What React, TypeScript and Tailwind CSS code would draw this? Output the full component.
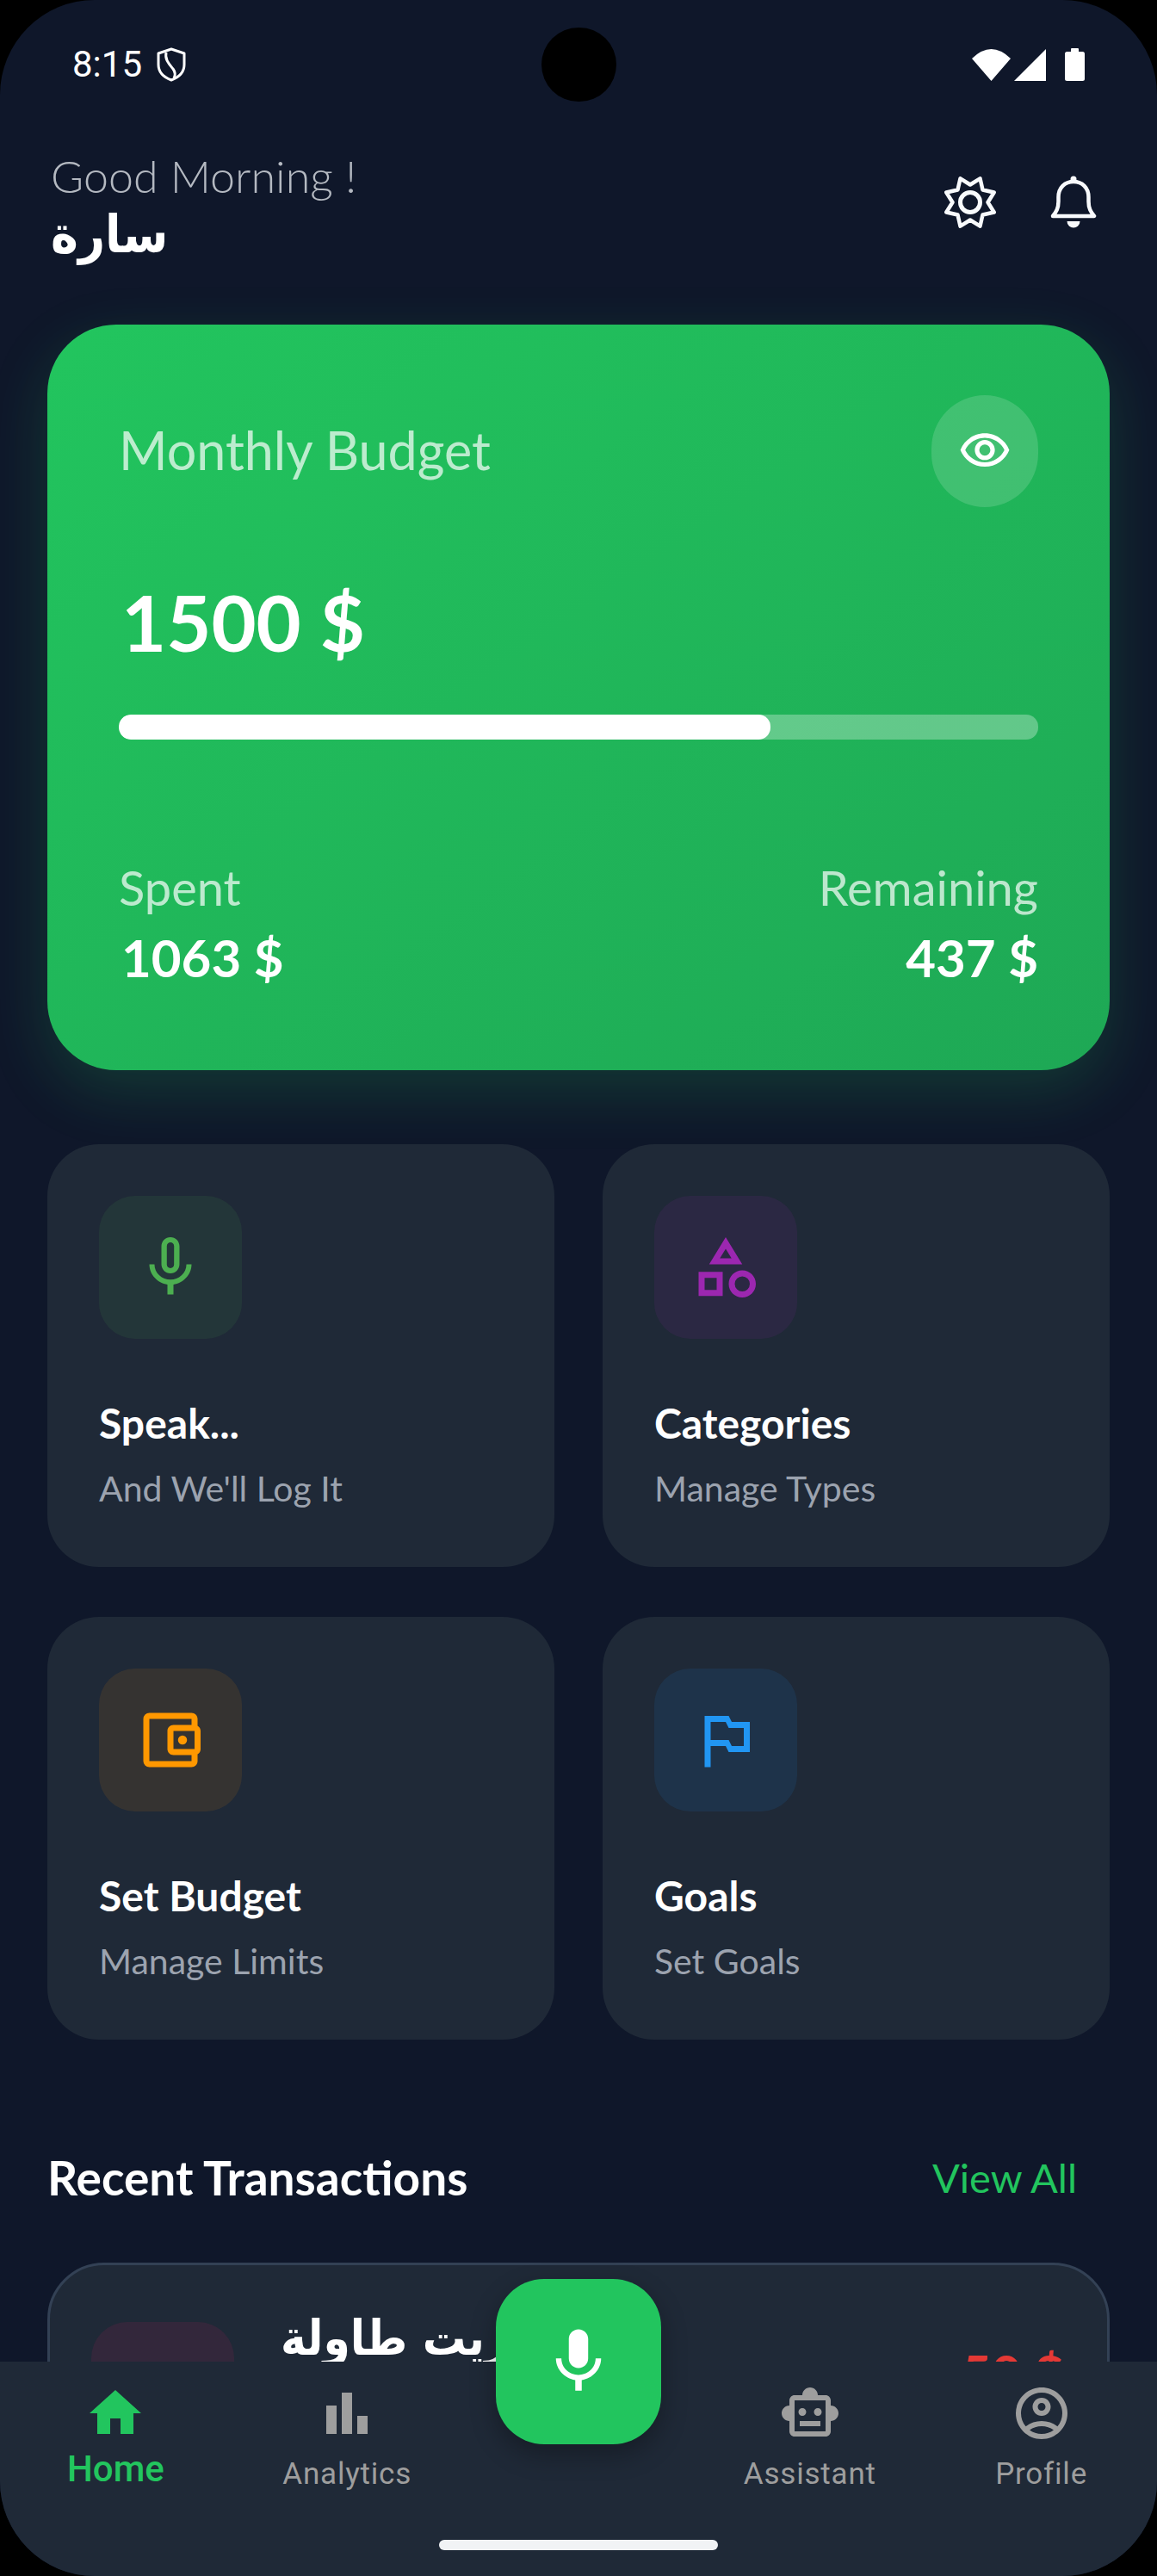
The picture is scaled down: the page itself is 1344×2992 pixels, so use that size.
import React from 'react';
import {
  MdBarChart,
  MdHome,
  MdMic,
  MdMicNone,
  MdOutlineAccountBalanceWallet,
  MdOutlineAccountCircle,
  MdOutlineCategory,
  MdOutlinedFlag,
  MdOutlineSmartToy,
  MdOutlineVisibility,
} from 'react-icons/md';
import type { IconType } from 'react-icons';

interface Action {
  title: string;
  sub: string;
  Icon: IconType;
  iconClass: string;
  boxClass: string;
}

const actions: Action[] = [
  { title: 'Speak...', sub: "And We'll Log It", Icon: MdMicNone, iconClass: 'text-[#4caf50]', boxClass: 'bg-[#4caf50]/10' },
  { title: 'Categories', sub: 'Manage Types', Icon: MdOutlineCategory, iconClass: 'text-[#9c27b0]', boxClass: 'bg-[#9c27b0]/10' },
  { title: 'Set Budget', sub: 'Manage Limits', Icon: MdOutlineAccountBalanceWallet, iconClass: 'text-[#ff9800]', boxClass: 'bg-[#ff9800]/10' },
  { title: 'Goals', sub: 'Set Goals', Icon: MdOutlinedFlag, iconClass: 'text-[#2196f3]', boxClass: 'bg-[#2196f3]/10' },
];

const navItems = [
  { label: 'Home', Icon: MdHome, active: true },
  { label: 'Analytics', Icon: MdBarChart, active: false },
  null,
  { label: 'Assistant', Icon: MdOutlineSmartToy, active: false },
  { label: 'Profile', Icon: MdOutlineAccountCircle, active: false },
];

// eight pointed star, outer points sit between the axes
const gearPoints = Array.from({ length: 16 }, (_, i) => {
  const r = i % 2 === 0 ? 20.5 : 30;
  const a = (i * 22.5 * Math.PI) / 180;
  return `${(33 + r * Math.sin(a)).toFixed(2)},${(33 - r * Math.cos(a)).toFixed(2)}`;
}).join(' ');

function StatusBar() {
  return (
    <div className="flex h-[150px] shrink-0 items-center justify-between pl-[84px] pr-[84px]">
      <div className="flex items-center gap-[17px] font-['Roboto',sans-serif] text-[42px] leading-none text-white">
        <span>8:15</span>
        <svg width="34" height="40" viewBox="0 0 34 40" fill="none" stroke="white" strokeWidth="3" strokeLinejoin="round">
          <path d="M17 2 L32 7 V20 C32 29 25 35 17 38 C9 35 2 29 2 20 V7 Z" />
          <path d="M11 6 C9 14 15 20 19 25 C22 29 22 32 20 36" />
        </svg>
      </div>
      <div className="flex items-center gap-[4px]">
        <svg width="45" height="37" viewBox="0 0 45 37" fill="white">
          <path d="M0 11 Q22.500 -11 45 11 L22.500 37 Z" />
        </svg>
        <svg width="37" height="37" viewBox="0 0 37 37" fill="white">
          <path d="M37 0 V37 H0 Z" />
        </svg>
        <svg className="ml-[18px]" width="23" height="38" viewBox="0 0 23 38" fill="white">
          <rect x="7" y="0" width="9" height="6" rx="1" />
          <rect x="0" y="4" width="23" height="34" rx="2.500" />
        </svg>
      </div>
    </div>
  );
}

function Header() {
  return (
    <div className="flex shrink-0 items-start justify-between pl-[59px] pr-[70px] pt-[22px]">
      <div>
        <p className="text-[52px] font-light leading-[64px] text-[#b4b9c1]">Good Morning !</p>
        <p className="text-left font-['DejaVu_Sans_Condensed','DejaVu_Sans',sans-serif] text-[60px] font-bold leading-[72px] text-white" dir="rtl">سارة</p>
      </div>
      <div className="flex items-center gap-[60px] pt-[30px]">
        <svg width="66" height="66" viewBox="0 0 66 66" fill="none" stroke="#f8fafc" strokeWidth="4.500" strokeLinejoin="round">
          <polygon points={gearPoints} />
          <circle cx="33" cy="33" r="11.500" strokeWidth="5" />
        </svg>
        <svg width="54" height="62" viewBox="0 0 54 62" fill="none" stroke="#f8fafc" strokeWidth="4.500" strokeLinejoin="round">
          <circle cx="27" cy="4" r="3.500" fill="#f8fafc" stroke="none" />
          <path d="M3 47 C7 42 9.500 38 9.500 30 V25 C9.500 14 17 7 27 7 C37 7 44.500 14 44.500 25 V30 C44.500 38 47 42 51 47 Z" />
          <path d="M19.500 53 H34.500 A7.500 7.500 0 0 1 19.500 53 Z" fill="#f8fafc" stroke="none" />
        </svg>
      </div>
    </div>
  );
}

function BudgetCard() {
  return (
    <div className="mx-[55px] mt-[69px] h-[866px] shrink-0 rounded-[80px] bg-gradient-to-br from-[#22c55e] to-[#1ea855] px-[83px] pt-[82px] shadow-[0_24px_70px_rgba(34,197,94,0.2)]">
      <div className="flex items-start justify-between">
        <p className="pt-[28px] text-[61px] font-normal leading-[72px] text-white/70">Monthly Budget</p>
        <div className="flex h-[130px] w-[124px] items-center justify-center rounded-full bg-white/15">
          <MdOutlineVisibility className="text-white" size={62} />
        </div>
      </div>
      <p className="mt-[78px] pl-[3px] text-[90px] font-bold leading-[110px] text-white">1500 $</p>
      <div className="mt-[53px] h-[29px] w-full overflow-hidden rounded-[14px] bg-white/30">
        <div className="h-full rounded-[14px] bg-white" style={{ width: `${(1063 / 1500) * 100}%` }} />
      </div>
      <div className="mt-[140px] flex justify-between">
        <div>
          <p className="text-[56px] font-normal leading-[64px] text-white/70">Spent</p>
          <p className="mt-[14px] pl-[3px] text-[60px] font-bold leading-[70px] text-white">1063 $</p>
        </div>
        <div className="text-right">
          <p className="text-[56px] font-normal leading-[64px] text-white/70">Remaining</p>
          <p className="mt-[14px] text-[60px] font-bold leading-[70px] text-white">437 $</p>
        </div>
      </div>
    </div>
  );
}

function ActionGrid() {
  return (
    <div className="mx-[55px] mt-[86px] grid shrink-0 grid-cols-2 gap-x-[56px] gap-y-[58px]">
      {actions.map(({ title, sub, Icon, iconClass, boxClass }) => (
        <div key={title} className="h-[491px] rounded-[60px] bg-[#1f2937] pl-[60px] pt-[60px]">
          <div className={`flex h-[166px] w-[166px] items-center justify-center rounded-[42px] ${boxClass}`}>
            <Icon className={iconClass} size={84} />
          </div>
          <p className="mt-[68px] text-[48px] font-bold leading-[60px] text-white">{title}</p>
          <p className="mt-[18px] text-[41px] font-normal leading-[56px] text-[#9ca3af]">{sub}</p>
        </div>
      ))}
    </div>
  );
}

function RecentTransactions() {
  return (
    <div className="mx-[55px] shrink-0">
      <div className="mt-[125px] flex items-center justify-between pr-[38px]">
        <p className="text-[55px] font-bold leading-[70px] text-white">Recent Transactions</p>
        <p className="text-[47px] font-normal leading-[70px] text-[#22c55e]">View All</p>
      </div>
      <div className="mt-[64px] flex h-[300px] items-start rounded-[66px] border-[3px] border-[#334155] bg-[#1f2937] pl-[48px] pr-[50px] pt-[66px]">
        <div className="h-[166px] w-[166px] shrink-0 rounded-[42px] bg-[#e91e63]/10" />
        <p className="-mt-[16px] ml-[54px] flex-1 text-left font-['DejaVu_Sans_Condensed','DejaVu_Sans',sans-serif] text-[56px] font-bold leading-[70px] text-white" dir="rtl">اشتريت طاولة</p>
        <p className="pt-[24px] text-[60px] font-bold leading-[70px] text-[#e53935]">50 $</p>
      </div>
    </div>
  );
}

function BottomNav() {
  return (
    <div className="absolute inset-x-0 bottom-0 h-[249px] bg-[#1f2937]">
      <div className="grid grid-cols-5 pt-[24px]">
        {navItems.map((item, i) =>
          item ? (
            <div key={item.label} className="flex flex-col items-center">
              <item.Icon className={item.active ? 'text-[#22c55e]' : 'text-[#9e9e9e]'} size={72} />
              <span
                className={`font-['Roboto',sans-serif] ${
                  item.active
                    ? 'mt-[6px] text-[42px] font-medium leading-[46px] text-[#22c55e]'
                    : 'mt-[14px] text-[35px] leading-[42px] tracking-[0.8px] text-[#9e9e9e]'
                }`}
              >
                {item.label}
              </span>
            </div>
          ) : (
            <div key={i} />
          ),
        )}
      </div>
      <div className="absolute bottom-[30px] left-1/2 h-[12px] w-[324px] -translate-x-1/2 rounded-full bg-[#f1f3f5]" />
    </div>
  );
}

export default function App() {
  return (
    <div className="h-[2992px] w-[1344px] bg-black font-['Lato','DejaVu_Sans',sans-serif]">
      <div className="relative flex h-full flex-col overflow-hidden rounded-[110px] bg-[#0f172a]">
        <div className="absolute left-[629px] top-[32px] h-[86px] w-[87px] rounded-full bg-black" />
        <StatusBar />
        <Header />
        <BudgetCard />
        <ActionGrid />
        <RecentTransactions />
        <BottomNav />
        <button className="absolute left-[576px] top-[2647px] flex h-[192px] w-[192px] items-center justify-center rounded-[56px] bg-[#22c55e] shadow-[0_12px_30px_rgba(0,0,0,0.3)]">
          <MdMic className="text-white" size={90} />
        </button>
      </div>
    </div>
  );
}
